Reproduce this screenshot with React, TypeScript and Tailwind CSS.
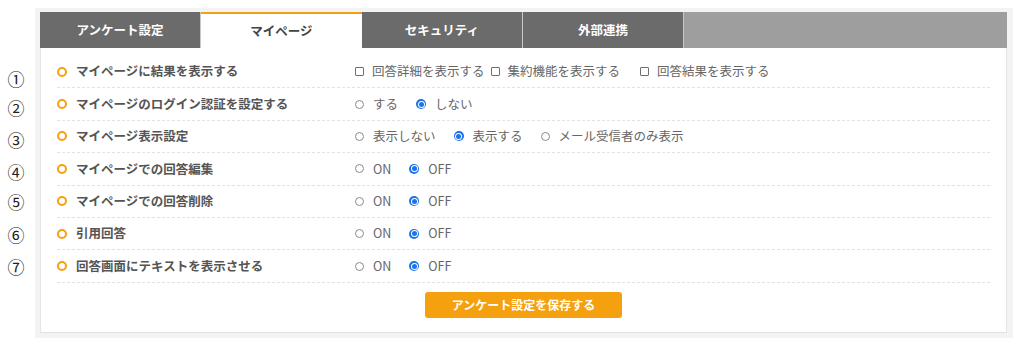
import React from "react";

// ============================================
// DATA
// ============================================

type Choice = { label: string; checked?: boolean };

interface Row {
  num: string;
  label: string;
  kind: "check" | "radio";
  choices: Choice[];
}

const onOff: Choice[] = [{ label: "ON" }, { label: "OFF", checked: true }];

const rows: Row[] = [
  {
    num: "①",
    label: "マイページに結果を表示する",
    kind: "check",
    choices: [
      { label: "回答詳細を表示する" },
      { label: "集約機能を表示する" },
      { label: "回答結果を表示する" },
    ],
  },
  {
    num: "②",
    label: "マイページのログイン認証を設定する",
    kind: "radio",
    choices: [{ label: "する" }, { label: "しない", checked: true }],
  },
  {
    num: "③",
    label: "マイページ表示設定",
    kind: "radio",
    choices: [
      { label: "表示しない" },
      { label: "表示する", checked: true },
      { label: "メール受信者のみ表示" },
    ],
  },
  { num: "④", label: "マイページでの回答編集", kind: "radio", choices: onOff },
  { num: "⑤", label: "マイページでの回答削除", kind: "radio", choices: onOff },
  { num: "⑥", label: "引用回答", kind: "radio", choices: onOff },
  { num: "⑦", label: "回答画面にテキストを表示させる", kind: "radio", choices: onOff },
];

const tabs = ["アンケート設定", "マイページ", "セキュリティ", "外部連携"];

// number column offsets (they don't sit exactly on the rows)
const numHeights = ["h-[29px]", "h-[32px]", "h-[32px]", "h-[30px]", "h-[33px]", "h-[32px]", "h-[32px]"];

// ============================================
// SMALL PARTS
// ============================================

function Radio({ checked }: { checked?: boolean }) {
  if (checked) {
    return (
      <span className="w-[10px] h-[10px] rounded-full bg-[#1a73e8] flex items-center justify-center flex-shrink-0">
        <span className="w-[7px] h-[7px] rounded-full bg-white flex items-center justify-center">
          <span className="w-[5px] h-[5px] rounded-full bg-[#1a73e8]" />
        </span>
      </span>
    );
  }
  return <span className="w-[9px] h-[9px] rounded-full border border-[#8a8a8a] bg-white flex-shrink-0" />;
}

function Check() {
  return <span className="w-[9px] h-[9px] rounded-[1px] border border-[#707070] bg-white flex-shrink-0" />;
}

function Choices({ row }: { row: Row }) {
  if (row.kind === "check") {
    return (
      <div className="flex items-center text-[#666]">
        {row.choices.map((c, i) => (
          <div key={c.label} className={i === 0 ? "flex items-center" : i === 1 ? "flex items-center ml-[6px]" : "flex items-center ml-[20px]"}>
            <Check />
            <span className="ml-[8px]">{c.label}</span>
          </div>
        ))}
      </div>
    );
  }
  return (
    <div className="flex items-center gap-[18px] text-[#666]">
      {row.choices.map((c) => (
        <div key={c.label} className="flex items-center gap-[9px]">
          <Radio checked={c.checked} />
          <span>{c.label}</span>
        </div>
      ))}
    </div>
  );
}

// ============================================
// APP
// ============================================

export default function App() {
  return (
    <div
      className="w-[1024px] h-[347px] bg-white flex text-[12.5px] leading-none"
      style={{ fontFamily: '"Noto Sans CJK JP", "Noto Sans", sans-serif' }}
    >
      {/* circled numbers */}
      <div className="w-[35px] pt-[70px] flex flex-col">
        {rows.map((r, i) => (
          <div key={r.num} className={`${numHeights[i]} flex justify-center pr-[3px] text-[17px] text-[#222]`}>
            {r.num}
          </div>
        ))}
      </div>

      {/* frame */}
      <div className="mt-[8px] w-[978px] h-[330px] bg-[#f3f3f3] pl-[5px] pt-[4px] pr-[6px] pb-[5px]">
        <div className="h-full flex flex-col bg-white border-b border-[#e2e2e2]">
          {/* tabs */}
          <div className="flex h-[36px]">
            {tabs.map((t, i) =>
              i === 1 ? (
                <div
                  key={t}
                  className="w-[161px] flex items-center justify-center bg-white border-t-2 border-[#f5a00f] font-bold text-[#444]"
                >
                  {t}
                </div>
              ) : (
                <div
                  key={t}
                  className="w-[161px] flex items-center justify-center bg-[#6b6b6b] border-r border-[#c8c8c8] font-bold text-white"
                >
                  {t}
                </div>
              )
            )}
            <div className="flex-1 bg-[#9e9e9e]" />
          </div>

          {/* settings rows */}
          <div className="flex-1 flex flex-col px-[16px] pt-[8px] border-l border-r border-[#e6e6e6]">
            {rows.map((r) => (
              <div
                key={r.num}
                className="h-[32.4px] flex items-center border-b border-dashed border-[#e2e2e2]"
              >
                <div className="w-[298px] flex items-center">
                  <span className="w-[10px] h-[10px] rounded-full border-[2.5px] border-[#f5a00f] flex-shrink-0" />
                  <span className="ml-[9px] font-bold text-[#555]">{r.label}</span>
                </div>
                <Choices row={r} />
              </div>
            ))}

            <div className="flex justify-center pt-[9px]">
              <button className="w-[197px] h-[26px] rounded-[3px] bg-[#f5a00f] text-white font-bold text-[12px]">
                アンケート設定を保存する
              </button>
            </div>
          </div>
        </div>
      </div>
    </div>
  );
}
